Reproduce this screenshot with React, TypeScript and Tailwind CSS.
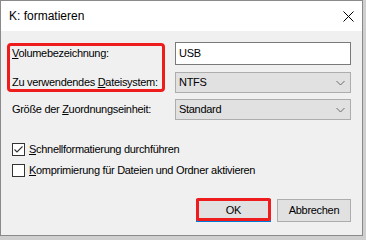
import React from "react";

function Chevron() {
  return (
    <svg width="9" height="6" viewBox="0 0 9 6" className="shrink-0">
      <path d="M0.5 1 L4.5 5 L8.5 1" fill="none" stroke="#6d6d6d" strokeWidth="1" />
    </svg>
  );
}

function Check({ checked }: { checked: boolean }) {
  return (
    <div className="w-[13px] h-[13px] border border-[#333333] bg-white shrink-0 flex items-center justify-center">
      {checked && (
        <svg width="11" height="11" viewBox="0 0 11 11">
          <path d="M1.5 5.5 L4 8 L9.5 2.5" fill="none" stroke="#333333" strokeWidth="1.1" />
        </svg>
      )}
    </div>
  );
}

export default function App() {
  return (
    <div className="relative w-[366px] h-[240px] bg-[#cfcfcf] overflow-hidden text-[11px] tracking-[-0.3px] text-black font-['Liberation_Sans',Arial,sans-serif] whitespace-nowrap">
      <div className="w-[363px] h-[236px] border border-[#8a8a8a] bg-[#f0f0f0] flex flex-col">
        <div className="h-[30px] bg-white flex items-center justify-between pl-[8px] pr-[8px] shrink-0">
          <span className="text-[12px] tracking-normal leading-none">K: formatieren</span>
          <svg width="11" height="11" viewBox="0 0 11 11">
            <path d="M0.5 0.5 L10.5 10.5 M10.5 0.5 L0.5 10.5" stroke="#000" strokeWidth="1" />
          </svg>
        </div>
        <div className="flex-1 flex flex-col pl-[11px] pr-[11px] pt-[11px]">
          <div className="flex items-center h-[23px]">
            <div className="w-[163px] shrink-0">
              <u>V</u>olumebezeichnung:
            </div>
            <div className="flex-1 h-[23px] border border-[#7a7a7a] bg-white flex items-center pl-[3px]">
              USB
            </div>
          </div>
          <div className="flex items-center h-[21px] mt-[7px]">
            <div className="w-[163px] shrink-0">
              Zu verwendendes <u>D</u>ateisystem:
            </div>
            <div className="flex-1 h-[21px] border border-[#adadad] bg-[#e1e1e1] flex items-center justify-between pl-[3px] pr-[5px]">
              <span>NTFS</span>
              <Chevron />
            </div>
          </div>
          <div className="flex items-center h-[21px] mt-[6px]">
            <div className="w-[163px] shrink-0">
              Größe der <u>Z</u>uordnungseinheit:
            </div>
            <div className="flex-1 h-[21px] border border-[#adadad] bg-[#e1e1e1] flex items-center justify-between pl-[3px] pr-[5px]">
              <span>Standard</span>
              <Chevron />
            </div>
          </div>
          <div className="flex items-center h-[14px] mt-[22px] gap-[4px]">
            <Check checked={true} />
            <span>
              <u>S</u>chnellformatierung durchführen
            </span>
          </div>
          <div className="flex items-center h-[14px] mt-[7px] gap-[4px]">
            <Check checked={false} />
            <span>
              <u>K</u>omprimierung für Dateien und Ordner aktivieren
            </span>
          </div>
          <div className="flex justify-end gap-[6px] mt-[22px]">
            <div className="w-[75px] h-[23px] bg-[#e1e1e1] border border-[#0078d7] flex items-center justify-center">
              OK
            </div>
            <div className="w-[74px] h-[23px] bg-[#e1e1e1] border border-[#adadad] flex items-center justify-center">
              Abbrechen
            </div>
          </div>
        </div>
      </div>
      <div className="absolute left-[7px] top-[43px] w-[158px] h-[49px] border-[3px] border-[#ee1c1c] rounded-[4px]" />
      <div className="absolute left-[196px] top-[198px] w-[75px] h-[23px] border-[3px] border-[#ee1c1c] rounded-[2px]" />
    </div>
  );
}
